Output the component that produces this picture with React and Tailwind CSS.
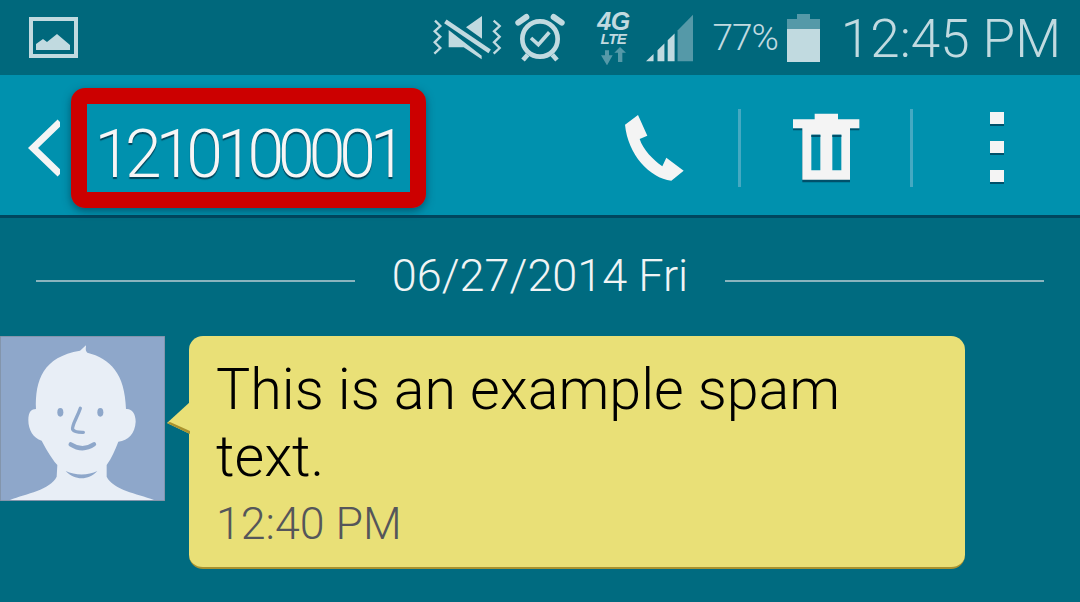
// Pantalla de mensajes: barra de estado, barra de acciones y burbuja
const LIGHT = "#c1dae0";
const DIM = "#5599a8";

function ImageIcon() {
  return (
    <svg width="49" height="41" viewBox="0 0 49 41" className="block">
      <rect x="2" y="2" width="45" height="37" fill="none" stroke={LIGHT} strokeWidth="4" />
      <path d="M7 33 V27 L14 22 L18 25 L28 17 L41 28 V33 Z" fill={LIGHT} />
    </svg>
  );
}

function MuteVibrateIcon() {
  return (
    <svg width="70" height="48" viewBox="45 40 210 144" className="block">
      <path d="M195 46 V114 L147 80 Z M95 88 L194 165 V176 L140 140 H95 Z" fill={LIGHT} />
      <path d="M85 62 L218 152" stroke={LIGHT} strokeWidth="13" />
      <path d="M54 60 L70 76 L53 92 L70 108 L53 125 L70 142 L52 159" fill="none" stroke={LIGHT} strokeWidth="7" />
      <path d="M230 60 L248 76 L231 92 L248 108 L231 125 L248 142 L230 159" fill="none" stroke={LIGHT} strokeWidth="7" />
    </svg>
  );
}

function AlarmIcon() {
  return (
    <svg width="50" height="50" viewBox="292 37 150 150" className="block">
      <circle cx="367" cy="115" r="53" fill="none" stroke={LIGHT} strokeWidth="14" />
      <path d="M302 66 L326 49 M408 49 L432 66" stroke={LIGHT} strokeWidth="18" strokeLinecap="round" />
      <path d="M340 112 L362 132 L395 95" fill="none" stroke={LIGHT} strokeWidth="11" />
      <path d="M316 178 L330 162 M418 178 L404 162" stroke={LIGHT} strokeWidth="14" />
    </svg>
  );
}

function DataArrows() {
  return (
    <svg width="26" height="18" viewBox="545 135 78 54" className="block">
      <path d="M548 160 L566 190 L583 160 H572 V145 H560 V160 Z" fill={DIM} />
      <path d="M588 152 L605 135 L623 152 H612 V180 H599 V152 Z" fill={DIM} />
    </svg>
  );
}

function SignalIcon() {
  return (
    <svg width="49" height="48" viewBox="680 38 147 146" className="block">
      <path d="M682 182 L705 160 V182 Z M717 148 L738 128 V182 H717 Z M748 118 L769 97 V182 H748 Z" fill={LIGHT} />
      <path d="M778 88 L825 40 V182 H778 Z" fill={DIM} />
    </svg>
  );
}

function BatteryIcon() {
  return (
    <div className="flex flex-col items-center w-[33px]">
      <div className="w-[13px] h-[5px] bg-[#5599a8]"></div>
      <div className="w-full h-[10px] bg-[#5599a8]"></div>
      <div className="w-full h-[33px] bg-[#c1dae0]"></div>
    </div>
  );
}

function PhoneIcon() {
  return (
    <svg width="64" height="70" viewBox="70 85 192 210" className="block">
      <path
        d="M115 91 L143 153 L120 163 C130 195 160 225 188 245 L200 219 L252 258 L215 288 C150 280 85 210 76 120 Z"
        fill="#f4f4f4"
      />
    </svg>
  );
}

function TrashIcon() {
  return (
    <svg width="67" height="70" viewBox="578 88 201 210" className="block">
      {/* sombra inferior */}
      <path d="M578 134 H777 V140 H749 V296 H606 V140 H578 Z" fill="#00506a" />
      <path
        d="M643 90 H713 V107 H777 V134 H749 V288 H606 V134 H578 V107 H643 Z"
        fill="#f4f4f4"
      />
      {/* ranuras */}
      <path d="M633 153 H660 V260 H633 Z M696 153 H723 V260 H696 Z" fill="#0091ae" />
      <path d="M633 153 H660 V160 H633 Z M696 153 H723 V160 H696 Z" fill="#00506a" />
    </svg>
  );
}

function Avatar() {
  return (
    <svg width="165" height="165" viewBox="0 18 495 495" className="block shrink-0">
      <rect x="0" y="18" width="495" height="495" fill="#8ea7ca" stroke="#7f8c9e" strokeWidth="4" />
      <path
        d="M30 510 C80 490 150 480 170 440 L172 405 C150 380 135 350 125 332 C100 325 85 300 85 270 C85 245 95 237 108 237 C105 150 130 80 240 62 L258 46 C258 55 255 62 262 68 C330 85 375 130 378 237 C395 235 407 250 407 275 C405 310 385 332 355 335 C345 360 335 385 320 405 L320 440 C340 480 410 490 462 510 Z"
        fill="#e8eef6"
      />
      <ellipse cx="181" cy="247" rx="9" ry="13" fill="#8ea7ca" />
      <ellipse cx="301" cy="247" rx="9" ry="13" fill="#8ea7ca" />
      <path d="M241 235 C232 262 215 285 218 298 C224 308 240 307 250 307" fill="none" stroke="#8ea7ca" strokeWidth="10" strokeLinecap="round" />
      <path d="M212 343 C235 358 260 358 282 343" fill="none" stroke="#8ea7ca" strokeWidth="13" strokeLinecap="round" />
      <path d="M197 423 C225 437 265 437 292 423 C265 452 225 452 197 423 Z" fill="#8ea7ca" />
    </svg>
  );
}

function Divider() {
  return <div className="w-[3px] h-[78px] bg-[#45a9c2]"></div>;
}

function MenuDot() {
  return <div className="w-[14px] h-[14px] bg-[#f4f4f4] border-b-2 border-[#00506a]"></div>;
}

export default function App() {
  return (
    <div className="w-[1080px] h-[602px] overflow-hidden flex flex-col bg-[#006b80] font-['Roboto',sans-serif]">
      {/* Barra de estado */}
      <div className="h-[75px] shrink-0 flex items-center bg-[#00687c] pl-[29px] pr-[19px]">
        <ImageIcon />
        <div className="ml-auto flex items-center">
          <MuteVibrateIcon />
          <div className="ml-[13px]"><AlarmIcon /></div>
          <div className="ml-[31px] w-[34px] flex flex-col items-center font-['Liberation_Sans',sans-serif] italic font-bold text-[#c1dae0]">
            <span className="text-[25px] leading-[21px] tracking-[-0.5px]">4G</span>
            <span className="text-[15px] leading-[13px] tracking-[-0.5px]">LTE</span>
            <div className="mt-[2px]"><DataArrows /></div>
          </div>
          <div className="ml-[15px]"><SignalIcon /></div>
          <span className="ml-[18px] text-[37px] font-light leading-none tracking-[-1px] text-[#c1dae0]">77%</span>
          <div className="ml-[9px]"><BatteryIcon /></div>
          <span className="ml-[21px] mt-[3px] text-[53px] font-light leading-none text-[#c1dae0]">12:45 PM</span>
        </div>
      </div>

      {/* Barra de acciones */}
      <div className="h-[143px] shrink-0 flex items-center bg-[#0091ae] border-b-[3px] border-[#00475f] pl-[28px] pt-[6px]">
        <svg width="32" height="58" viewBox="0 0 32 58" className="block">
          <path d="M32 3 L5 29 L32 55" fill="none" stroke="#f4f4f4" strokeWidth="7" />
        </svg>
        <div className="ml-[11px] w-[355px] h-[120px] flex items-center justify-center border-[16px] border-[#cc0000] rounded-[14px] pt-[14px] pr-[2px] shadow-[0_3px_8px_rgba(0,50,70,0.6)]">
          <span className="text-[66px] font-light leading-none tracking-[-6px] text-[#f6f6f6] [text-shadow:0_2px_1px_rgba(0,50,70,0.8)]">1210100001</span>
        </div>
        <div className="ml-[197px]"><PhoneIcon /></div>
        <div className="ml-[51px]"><Divider /></div>
        <div className="ml-[52px]"><TrashIcon /></div>
        <div className="ml-[50px]"><Divider /></div>
        <div className="ml-[77px] flex flex-col gap-[15px]">
          <MenuDot />
          <MenuDot />
          <MenuDot />
        </div>
      </div>

      {/* Fecha */}
      <div className="h-[118px] shrink-0 flex items-center px-[36px]">
        <div className="flex-1 h-[2px] bg-[#8ab4be] mt-[8px]"></div>
        <span className="mx-[37px] mb-[4px] text-[45px] font-light leading-none text-[#f0f4f5]">06/27/2014 Fri</span>
        <div className="flex-1 h-[2px] bg-[#8ab4be] mt-[8px]"></div>
      </div>

      {/* Mensaje */}
      <div className="flex items-start">
        <Avatar />
        <div className="relative ml-[24px] w-[776px] h-[233px] bg-[#e9e077] rounded-[14px] border-b-2 border-[#a8922f] pl-[27px] pt-[20px]">
          <svg width="23" height="32" viewBox="0 0 23 32" className="absolute left-[-22px] top-[66px]">
            <path d="M23 0 L0 21 L23 32 Z" fill="#e9e077" />
            <path d="M0 21 L23 32 V29 L3 20 Z" fill="#a8922f" />
          </svg>
          <p className="w-[700px] text-[57.4px] font-light leading-[67px] text-black">This is an example spam text.</p>
          <p className="mt-[9px] text-[44.7px] font-light leading-[50px] text-[#55565a]">12:40 PM</p>
        </div>
      </div>
    </div>
  );
}
